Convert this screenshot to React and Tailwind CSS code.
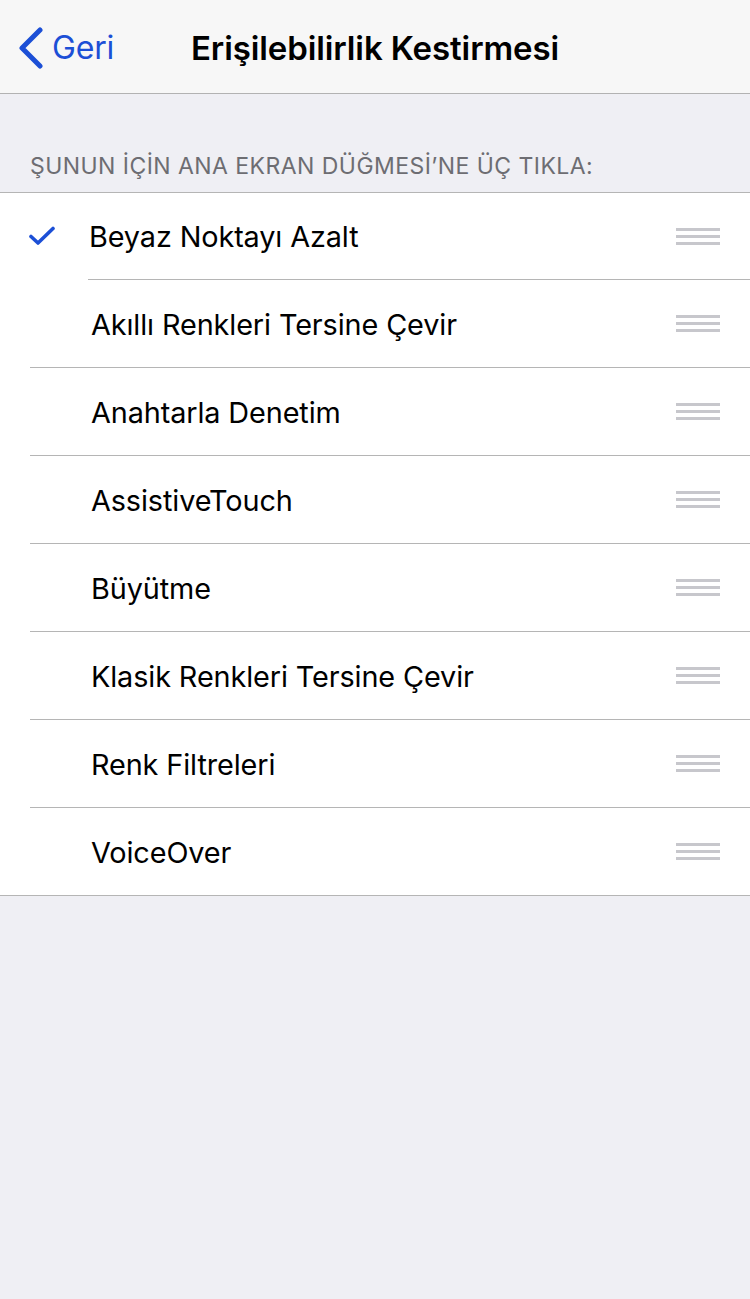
import React from 'react';

const items = [
  'Beyaz Noktayı Azalt',
  'Akıllı Renkleri Tersine Çevir',
  'Anahtarla Denetim',
  'AssistiveTouch',
  'Büyütme',
  'Klasik Renkleri Tersine Çevir',
  'Renk Filtreleri',
  'VoiceOver',
];

function Grip() {
  return (
    <div className="flex flex-col gap-[4px] w-[44px] mr-[30px]">
      <div className="h-[3px] bg-[#c7c7cc]" />
      <div className="h-[3px] bg-[#c7c7cc]" />
      <div className="h-[3px] bg-[#c7c7cc]" />
    </div>
  );
}

function Check() {
  return (
    <svg width="26" height="20" viewBox="0 0 26 20" fill="none">
      <path d="M2 10.5 L9 17 L24 2.5" stroke="#1c4fd6" strokeWidth="3.6" strokeLinecap="round" strokeLinejoin="round" />
    </svg>
  );
}

export default function App() {
  return (
    <div className="min-h-[1299px] bg-[#efeff4] font-['Inter','Noto_Sans',sans-serif]">
      <div className="h-[94px] bg-[#f7f7f7] border-b border-[#b2b2b2] relative flex items-center">
        <div className="flex items-center pl-[18px] pt-[3px] text-[#1c4fd6]">
          <svg width="26" height="42" viewBox="0 0 26 42" fill="none" className="-mt-[1px]">
            <path d="M22 3 L4 21 L22 39" stroke="#1c4fd6" strokeWidth="5" strokeLinecap="round" strokeLinejoin="round" />
          </svg>
          <span className="ml-[8px] text-[32px] leading-none tracking-[-0.2px]">Geri</span>
        </div>
        <div className="absolute inset-0 flex items-center justify-center pt-[3px] pointer-events-none">
          <span className="text-[33px] font-semibold text-black leading-none tracking-[-0.1px]">Erişilebilirlik Kestirmesi</span>
        </div>
      </div>

      <div className="h-[98px] flex items-end px-[30px] pb-[11px]">
        <span className="text-[23px] leading-[30px] text-[#6d6d72] tracking-[0.45px]">ŞUNUN İÇİN ANA EKRAN DÜĞMESİ’NE ÜÇ TIKLA:</span>
      </div>

      <div className="bg-white border-t border-b border-[#b5b5b5]">
        {items.map((label, i) => (
          <div key={label}>
            <div className={`${i === 0 ? 'h-[86px]' : 'h-[87px]'} flex items-center`}>
              <div className="w-[91px] pl-[29px] flex items-center">
                {i === 0 && <Check />}
              </div>
              <span className={`flex-1 pt-[3px] text-[28.8px] text-black leading-none tracking-[-0.1px] ${i === 0 ? '-ml-[2px]' : ''}`}>{label}</span>
              <Grip />
            </div>
            {i < items.length - 1 && (
              <div className={`h-px bg-[#b5b5b5] ${i === 0 ? 'ml-[88px]' : 'ml-[30px]'}`} />
            )}
          </div>
        ))}
      </div>
    </div>
  );
}
